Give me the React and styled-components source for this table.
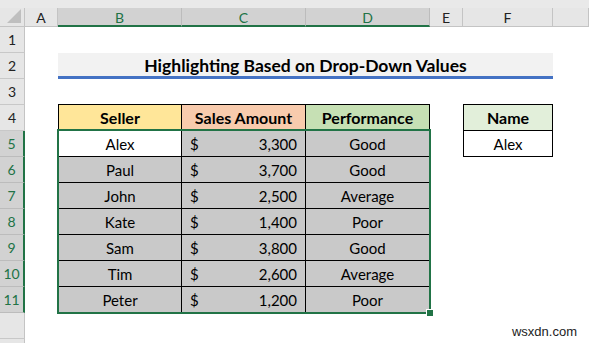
import React from 'react'
import styled, { createGlobalStyle } from 'styled-components'

const GlobalStyle = createGlobalStyle`
  html, body { margin: 0; padding: 0; background: #fff; }
  body { font-family: Lato, "Open Sans", sans-serif; color: #000; }
`

const GREEN = '#217346'

const columns = ['A', 'B', 'C', 'D', 'E', 'F', '']
const selectedCols = ['B', 'C', 'D']

const sales = [
  { seller: 'Alex', amount: '3,300', perf: 'Good' },
  { seller: 'Paul', amount: '3,700', perf: 'Good' },
  { seller: 'John', amount: '2,500', perf: 'Average' },
  { seller: 'Kate', amount: '1,400', perf: 'Poor' },
  { seller: 'Sam', amount: '3,800', perf: 'Good' },
  { seller: 'Tim', amount: '2,600', perf: 'Average' },
  { seller: 'Peter', amount: '1,200', perf: 'Poor' },
]

// sheet row n sits on grid row n + 2 (strip + column headers above)
const r = n => n + 2

function App() {
  return (
    <>
      <GlobalStyle />
      <Sheet>
        <TopStrip />
        <Corner>
          <svg width="14" height="14" viewBox="0 0 14 14">
            <polygon points="14,0 14,14 0,14" fill="#bfbfbf" />
          </svg>
        </Corner>
        {columns.map((c, i) => (
          <ColHead key={i} $col={i + 2} $selected={selectedCols.includes(c)}>
            {c}
          </ColHead>
        ))}

        {Array.from({ length: 12 }, (_, i) => (
          <RowHead key={i} $row={r(i + 1)} $selected={i >= 4 && i <= 10}>
            {i < 11 ? i + 1 : ''}
          </RowHead>
        ))}
        <RowFill />

        <Title>Highlighting Based on Drop-Down Values</Title>

        <Cell $col={3} $row={r(4)} $bg="#ffe699" $bold $top $left>Seller</Cell>
        <Cell $col={4} $row={r(4)} $bg="#f8cbad" $bold $top>Sales Amount</Cell>
        <Cell $col={5} $row={r(4)} $bg="#c6e0b4" $bold $top>Performance</Cell>

        {sales.map((s, i) => (
          <React.Fragment key={s.seller}>
            <Cell $col={3} $row={r(5 + i)} $bg={i === 0 ? '#fff' : '#c9c9c9'} $left>
              {s.seller}
            </Cell>
            <MoneyCell $col={4} $row={r(5 + i)}>
              <span>$</span>
              <span>{s.amount}</span>
            </MoneyCell>
            <Cell $col={5} $row={r(5 + i)} $bg="#c9c9c9">{s.perf}</Cell>
          </React.Fragment>
        ))}

        <Selection>
          <FillHandle />
        </Selection>

        <Cell $col={7} $row={r(4)} $bg="#e2efda" $bold $top $left>Name</Cell>
        <Cell $col={7} $row={r(5)} $bg="#fff" $left>Alex</Cell>

        <Watermark>wsxdn.com</Watermark>
      </Sheet>
    </>
  )
}

export default App

const Sheet = styled.div`
  position: relative;
  width: 100vw;
  height: 100vh;
  overflow: hidden;
  display: grid;
  grid-template-columns: 25px 33px 124px 124px 124px 33px 90px 1fr;
  grid-template-rows: 8px 19px repeat(12, 26px) 1fr;
`

const TopStrip = styled.div`
  grid-column: 1 / -1;
  grid-row: 1;
  background: #e9e9e9;
`

const Corner = styled.div`
  grid-column: 1;
  grid-row: 2;
  background: #e6e6e6;
  border-right: 1px solid #c4c4c4;
  border-bottom: 1px solid #c4c4c4;
  display: flex;
  align-items: flex-end;
  justify-content: flex-end;
  padding: 0 3px 3px 0;
  box-sizing: border-box;
`

const ColHead = styled.div`
  grid-column: ${p => p.$col};
  grid-row: 2;
  background: ${p => (p.$selected ? '#d2d2d2' : '#e6e6e6')};
  color: ${p => (p.$selected ? GREEN : '#222')};
  border-right: 1px solid ${p => (p.$selected ? '#bcbcbc' : '#c4c4c4')};
  border-bottom: ${p => (p.$selected ? `2px solid ${GREEN}` : '1px solid #c4c4c4')};
  box-sizing: border-box;
  font-size: 14px;
  display: flex;
  align-items: center;
  justify-content: center;
  padding-top: ${p => (p.$selected ? '1px' : '0')};
`

const RowHead = styled.div`
  grid-column: 1;
  grid-row: ${p => p.$row};
  background: ${p => (p.$selected ? '#d2d2d2' : '#e6e6e6')};
  color: ${p => (p.$selected ? GREEN : '#222')};
  border-right: ${p => (p.$selected ? `2px solid ${GREEN}` : '1px solid #c4c4c4')};
  border-bottom: 1px solid ${p => (p.$selected ? '#bcbcbc' : '#c8c8c8')};
  box-sizing: border-box;
  font-size: 14px;
  display: flex;
  align-items: center;
  justify-content: center;
`

const RowFill = styled.div`
  grid-column: 1;
  grid-row: 15;
  background: #e6e6e6;
  border-right: 1px solid #c4c4c4;
`

const Title = styled.div`
  grid-column: 3 / 8;
  grid-row: 4;
  background: #f2f2f2;
  border-bottom: 3px solid #4472c4;
  box-sizing: border-box;
  font-size: 17.5px;
  font-weight: 700;
  display: flex;
  align-items: center;
  justify-content: center;
  padding-top: 1px;
`

const Cell = styled.div`
  grid-column: ${p => p.$col};
  grid-row: ${p => p.$row};
  background: ${p => p.$bg};
  border-right: 1px solid #000;
  border-bottom: 1px solid #000;
  border-left: ${p => (p.$left ? '1px solid #000' : 'none')};
  border-top: ${p => (p.$top ? '1px solid #000' : 'none')};
  margin-top: ${p => (p.$top ? '-1px' : '0')};
  box-sizing: border-box;
  font-size: ${p => (p.$bold ? '16px' : '15px')};
  font-weight: ${p => (p.$bold ? 700 : 400)};
  display: flex;
  align-items: center;
  justify-content: center;
`

const MoneyCell = styled(Cell)`
  background: #c9c9c9;
  justify-content: space-between;
  padding: 0 8px 0 8px;
`

const Selection = styled.div`
  grid-column: 3 / 6;
  grid-row: 7 / 14;
  position: relative;
  margin: -2px -1px -1px -1px;
  border: 2px solid ${GREEN};
  pointer-events: none;
`

const FillHandle = styled.div`
  position: absolute;
  right: -5px;
  bottom: -5px;
  width: 6px;
  height: 6px;
  background: ${GREEN};
  border: 1px solid #fff;
`

const Watermark = styled.div`
  position: absolute;
  right: 12px;
  bottom: 4px;
  font-family: "Liberation Sans", Arial, sans-serif;
  font-size: 13px;
  color: #222;
`
